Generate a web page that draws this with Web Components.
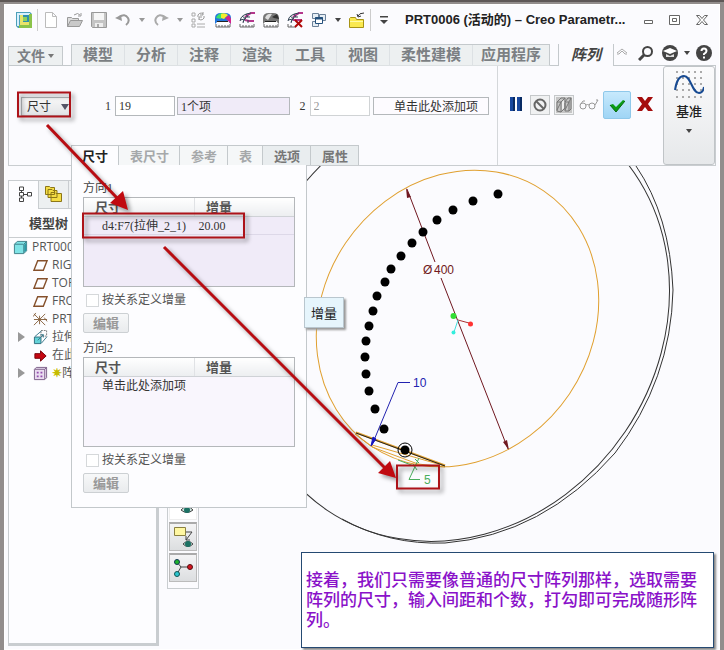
<!DOCTYPE html>
<html lang="zh-CN">
<head>
<meta charset="utf-8">
<title>PRT0006 – Creo Parametric</title>
<style>
  body { margin: 0; font: 12px/18px "Liberation Sans", "Noto Sans CJK SC", sans-serif; color: #333; background: #fbfbfe; }
</style>
</head>
<body>
<cad-window></cad-window>
<script>
const ICONS = {
  app: '<path d="M0 0h14l2 2v14H2L0 14z" fill="#4d9fb8"/><path d="M1 1h13v2H3v11H1z" fill="#d7f0ff"/><path d="M13 2h3v14H3v-3h10z" fill="#8bc34a"/><path d="M4 3h9v10H4z" fill="#2f8fae"/><path d="M5 3h2v7h6v3H4V3z" fill="#e8e36a"/><path d="M7 5h4v4H7z" fill="#8fd05a"/>',
  new: '<path d="M2.500.5h7l4 4v11h-11zM9.500.5v4h4" fill="#fff" stroke="#bbb"/>',
  open: '<path d="M.5 14.500v-9h4l1 1h6v2" fill="#ddd" stroke="#999"/><path d="M.5 14.500l3-6h12l-3 6z" fill="#c9c9c9" stroke="#999"/><path d="M7 3q4-3 6 0M14 1v3h-3" fill="none" stroke="#999"/>',
  save: '<path d="M.5.5h15v15h-14l-1-1z" fill="#c4c4c4" stroke="#999"/><path d="M3 1h10v7H3z" fill="#f6f6f6"/><path d="M4 11h8v4H4z" fill="#eee"/><path d="M6 12h2v3H6z" fill="#aaa"/>',
  undo: '<path d="M4 5q6-4 9 1q2 4-2 7" fill="none" stroke="#999" stroke-width="2"/><path d="M0 6l6-3 1 6z" fill="#999"/>',
  redo: '<path d="M12 5q-6-4-9 1q-2 4 2 7" fill="none" stroke="#aaa" stroke-width="2"/><path d="M16 6l-6-3-1 6z" fill="#aaa"/>',
  regen: '<path d="M1 1h3v3H1zM1 7h3v3H1zM1 12h3v3H1zM6 12h8M6 15h8" fill="none" stroke="#aaa"/><path d="M7 5a3 3 0 015-3M13 4a3 3 0 01-5 3M12 0v3H9M8 8V5h3" fill="none" stroke="#999"/>',
  rainbow: '<path d="M0 12V6q0-5 6-5h4q6 0 6 5v6l-3-3H3z" fill="#27d"/><path d="M1 6q2-5 7-5l-2 6z" fill="#3ce06a"/><path d="M6 2q4-2 7 1l-4 4-3-1z" fill="#f3ec2c"/><path d="M10 6l4-3 2 4v5l-4-4z" fill="#d3228b"/><path d="M3 9h10l2 3H1z" fill="#fff"/><path d="M2 9.500h11" stroke="#222"/><path d="M1 12v3h14v-3M4 13v2M7 13v2M10 13v2M13 13v2" stroke="#666" fill="none"/>',
  spline: '<path d="M16 1H12L6 5M15 9H10l-4-1" fill="none" stroke="#b4368c" stroke-width="2"/><path d="M12 1Q2 2 1 9M3 4l4 3M1 8l5-1M7 2l2 3M11 5H7l-3 5M5 8l-1 3M9 8v3" fill="none" stroke="#345"/><path d="M1 12v3h14v-3M4 13v2M7 13v2M10 13v2M13 13v2" stroke="#666" fill="none"/>',
  shade: '<path d="M0 12V6q0-5 6-5h4q6 0 6 5v6l-3-3H3z" fill="#777"/><path d="M2 6q2-5 7-4L5 8z" fill="#ddd"/><path d="M9 5l5-3 2 5-5-1z" fill="#333"/><path d="M3 9h10l2 3H1z" fill="#fff"/><path d="M2 9.500h11" stroke="#222"/><path d="M1 12v3h14v-3M4 13v2M7 13v2M10 13v2M13 13v2" stroke="#666" fill="none"/>',
  splinex: '<path d="M16 1H12L6 5M15 8H10l-4 0" fill="none" stroke="#b4368c" stroke-width="2"/><path d="M12 1Q2 2 1 9M3 4l4 3M1 8l5-1M7 2l2 3M11 5H7l-3 5M5 8l-1 3" fill="none" stroke="#345"/><path d="M1 12v3h8M4 13v2" stroke="#666" fill="none"/><path d="M8 8l7 7M15 8l-7 7" stroke="#b00808" stroke-width="2"/>',
  windows: '<path d="M1.500 1.500h6v5h-6zM8.500 2.500h6v6h-6zM1.500 9.500h6v5h-6z" fill="#e6eef5" stroke="#6c8199"/><path d="M4.500 5.500h7v6h-7z" fill="#fff" stroke="#24507d"/><path d="M4 6.500h8" stroke="#24507d" stroke-width="2"/>',
  folder: '<path d="M.5 15.500v-9l1-1h5l1 2h7v8z" fill="#fae94f" stroke="#a79315"/><path d="M1 9h13v1H1z" fill="#fffba8"/><path d="M9 4q1-3 6-3M8 2l1 3 3-1" fill="none" stroke="#333"/>',
  caretbar: '<path d="M4 4h8v1.500H4z" fill="#444"/><path d="M4 8h8l-4 4z" fill="#444"/>',
  min: '<path d="M4.500 8.500h8v3h-8z" fill="#fff" stroke="#666"/>',
  max: '<path d="M2.500 3.500h10v9h-10zM5.500 6.500h4v3h-4z" fill="#fff" stroke="#666"/>',
  close: '<path d="M2.500 3.500h3l2.500 3 2.500-3h3l-4 4.500 4 4.500h-3L8 9.500l-2.500 3h-3l4-4.500z" fill="#fff" stroke="#666"/>',
  up: '<path d="M3 8l5-4 5 4M3 9h2l3-3 3 3h2" fill="none" stroke="#aaa"/>',
  search: '<circle cx="9.500" cy="6.500" r="4.500" fill="none" stroke="#444" stroke-width="2"/><path d="M6 10l-5 5" stroke="#444" stroke-width="3"/>',
  learn: '<circle cx="8" cy="8" r="8" fill="#444"/><path d="M1 6l7-3 7 3-7 3z" fill="#fff"/><path d="M4 9l4 2 4-2v3H4z" fill="#ddd"/>',
  help: '<circle cx="8" cy="8" r="8" fill="#444"/><path d="M5.500 6q0-2.500 2.500-2.500T10.500 6Q10.500 7.500 8 9v1" fill="none" stroke="#fff" stroke-width="2"/><path d="M7 11.500h2v2H7z" fill="#fff"/>',
  pause: '<path d="M2 1h5v14H2zM9 1h5v14H9z" fill="#17479e"/><path d="M5 1h2v14H5zM12 1h2v14h-2z" fill="#082a63"/>',
  no: '<circle cx="8" cy="8" r="5.500" fill="none" stroke="#666" stroke-width="2"/><path d="M4 4l8 8" stroke="#666" stroke-width="2"/>',
  mesh: '<path d="M0 0h16v16H0z" fill="#c5c5c5"/><path d="M6 5l2-2v8l-2 2z" fill="#eee"/><path d="M1 5l4-4h4L5 5zM5 5v10l4-4V1M1 5v9l4 1M9 5l3-4h3l-2 4zM13 5v9l2-2V1M9 6v8h4M1 13L5 5M9 13l4-8" fill="none" stroke="#777"/>',
  glasses: '<circle cx="4" cy="10" r="3" fill="none" stroke="#999"/><circle cx="13" cy="10" r="3" fill="none" stroke="#999"/><path d="M7 9q1.500-1 3 0M1 9l3-4h2M16 9l3-5h-2" fill="none" stroke="#999"/>',
  check: '<path d="M1 8l3-1 3 3 7-7 2 1-9 11z" fill="#0a9c14"/><path d="M1 8l6 7 9-11" fill="none" stroke="#08670f"/>',
  cross: '<path d="M0 1h5l3 4 3-4h5l-5 7 5 7h-5l-3-4-3 4H0l5-7z" fill="#a50d0d"/>',
  treeview: '<path d="M3.500 1h4v3.500h-4zM3.500 6.500h4v3.500h-4zM3.500 12h4v3.500h-4zM11.500 6.500h4v3.500h-4zM5.500 4.500v2M5.500 10v2M7.500 8.500h4" fill="#fff" stroke="#444"/>',
  folders: '<path d="M.5.5h4l1 1h4v7h-9zM3 3.500h4l1 1h4v7H3zM6 6.500h4l1 1h5.500v8H6z" fill="#f4dd45" stroke="#8d7716"/>',
  part: '<path d="M1.500 4.500l3-3h10v10l-3 3h-10z" fill="#7fe3e6" stroke="#3d7d86"/><path d="M12 5l2-2v8l-2 2z" fill="#299aa6"/><path d="M11.500 14v-9.500l3-3M2 4.500h9" fill="none" stroke="#3d7d86"/>',
  plane: '<path d="M5 3h10l-4 10H1z" fill="none" stroke="#85502b" stroke-width="1.500"/>',
  csys: '<path d="M1 2l12 12M1 14L13 2M1 8h14M7 4v9M0 5l3-4M12 6l3 4" fill="none" stroke="#85603d"/>',
  extrude: '<path d="M1.500 7.500h7v7h-7z" fill="#65d3d8" stroke="#2d6c7c"/><path d="M8.500.5h6v6h-6z" fill="none" stroke="#777" stroke-dasharray="2 1"/><path d="M2 7l7-6M9 14l6-7M5 11l6-6M8 5h3v3" fill="none" stroke="#39798b"/>',
  insert: '<path d="M2 6h6V3l6 5.500L8 14v-3H2z" fill="#c40812" stroke="#760009"/>',
  pattern: '<path d="M1.500 3.500l2-2h11v11l-2 2h-11z" fill="#eadcf0" stroke="#7a5d86"/><path d="M4 6h2v2H4zM8 6h2v2H8zM4 10h2v2H4zM8 10h2v2H8z" fill="#944faf"/><path d="M12.500 14V3.500H2M12.500 3.500l2-2" fill="none" stroke="#7a5d86"/>',
  curve: '<path d="M2 1h28M2 7h28M2 13h28M2 19h28M2 26h28" stroke="#aaa" stroke-width="2" stroke-dasharray="2 4"/><path d="M1 19Q3 5 10 5c7 0 8 17 15 17q4 0 5-6" fill="none" stroke="#174a92" stroke-width="2"/>',
  eyeaxis: '<path d="M4 11h8M5 7v4" fill="none" stroke="#8a5a30" stroke-width="2"/><path d="M9 15q6-7 12 0q-6 5-12 0" fill="#cfe5e0" stroke="#444"/><circle cx="15" cy="15" r="3" fill="#1c7264"/>',
  eyenote: '<path d="M2.500 1.500h11v8h-11z" fill="#fff7a2" stroke="#8a8040"/><path d="M14 6h6l-6 8M14 10v4h4" fill="none" stroke="#444"/><path d="M11 18q5-5 10 0q-5 5-10 0" fill="#cfe5e0" stroke="#444"/><circle cx="16" cy="18" r="3" fill="#1c7264"/>',
  spin: '<path d="M5 5l4 5-4 7M9 10h9" fill="none" stroke="#444"/><circle cx="5" cy="5" r="2.500" fill="#1db32a" stroke="#135"/><circle cx="18" cy="10" r="2.500" fill="#d3131f" stroke="#511"/><circle cx="5" cy="17" r="2.500" fill="#2cc6cf" stroke="#155"/>'
};

const define = (name, html, setup) => {
  const template = document.createElement('template');
  template.innerHTML = html;
  customElements.define(name, class extends HTMLElement {
    constructor() {
      super();
      this.attachShadow({ mode: 'open' }).append(template.content.cloneNode(true));
    }
    connectedCallback() { if (setup) setup(this, this.shadowRoot); }
  });
};

define('ui-icon', `<style>:host{display:block;flex:none;width:16px;height:16px}svg{display:block;width:100%;height:100%}</style>`, (host, root) => {
  const box = host.getAttribute('box') || '0 0 16 16';
  root.innerHTML += `<svg viewBox="${box}" aria-hidden="true">${ICONS[host.getAttribute('name')]}</svg>`;
});

define('icon-button', `<style>
  :host{display:block;flex:none}
  button{display:block;width:100%;margin:0;padding:0;border:0;background:none}
  ui-icon{margin:auto;width:var(--icon-width,16px)}
</style><button type="button"></button>`, (host, root) => {
  const b = root.querySelector('button');
  b.setAttribute('aria-label', host.getAttribute('label') || host.getAttribute('name'));
  b.innerHTML = `<ui-icon name="${host.getAttribute('name')}" box="${host.getAttribute('box') || '0 0 16 16'}"></ui-icon>`;
});

define('caret-button', `<style>
  :host{display:block;flex:none;width:6px}
  button{display:block;margin:0;padding:4px 0;border:0;background:none}
  i{display:block;border:3px solid transparent;border-top:4px solid var(--caret,#999);border-bottom:0}
</style><button type="button" aria-label="更多"><i></i></button>`);

define('title-bar', `<style>
  :host{display:flex;align-items:center;gap:8px;height:32px;padding:0 10px 0 12px}
  hr{flex:none;width:1px;height:22px;margin:0 -3px;border:0;background:#ccc}
  h1{flex:1;min-width:0;margin:0 0 0 5px;font-size:13px;line-height:20px;font-weight:bold;color:#222;white-space:nowrap}
  .win{display:flex;gap:11px}
</style>
<icon-button name="app" label="Creo"></icon-button><hr>
<icon-button name="new" label="新建"></icon-button><icon-button name="open" label="打开"></icon-button><icon-button name="save" label="保存"></icon-button>
<icon-button name="undo" label="撤消"></icon-button><caret-button></caret-button><icon-button name="redo" label="重做"></icon-button><caret-button></caret-button>
<icon-button name="regen"></icon-button><icon-button name="rainbow"></icon-button><icon-button name="spline"></icon-button><icon-button name="shade"></icon-button><icon-button name="splinex"></icon-button><icon-button name="windows"></icon-button>
<caret-button style="--caret:#444"></caret-button><icon-button name="folder"></icon-button><hr><icon-button name="caretbar"></icon-button>
<h1>PRT0006 (活动的) – Creo Parametr...</h1>
<div class="win"><icon-button name="min" label="最小化"></icon-button><icon-button name="max" label="最大化"></icon-button><icon-button name="close" label="关闭"></icon-button></div>`);

define('ribbon-tabs', `<style>
  :host{display:flex;align-items:flex-end;margin:8px 4px 0;height:22px}
  button{margin:0;padding:0;border:0;background:none;font:bold 15px/20px "Liberation Sans","Noto Sans CJK SC",sans-serif;color:#7b7f83;white-space:nowrap}
  .file{width:55px;height:20px;border:1px solid #c4c9cc;background:#edf0f1;display:flex;align-items:center;justify-content:center;gap:3px;font-size:14px}
  i{border:3px solid transparent;border-top:4px solid #777;border-bottom:0}
  .gap{width:8px;box-sizing:border-box;border-bottom:1px solid #c4c9cc}
  nav{display:flex;border:1px solid #c4c9cc;border-bottom-color:#dde1e3;background:#edf0f1;height:20px}
  nav button{padding:0 11px;border-right:1px solid #dde1e4}
  nav button:last-child{border:0;padding:0 8px}
  .active{width:56px;height:22px;border:solid #c4c9cc;border-width:0 1px;font-style:italic;color:#444}
  .tools{flex:1;display:flex;align-items:center;justify-content:space-between;height:21px;padding:0 4px 4px 0;box-sizing:border-box;border-bottom:1px solid #c4c9cc}
  .tools caret-button{margin:0 -2px}
</style>
<button class="file" type="button">文件<i></i></button><span class="gap"></span>
<nav><button>模型</button><button>分析</button><button>注释</button><button>渲染</button><button>工具</button><button>视图</button><button>柔性建模</button><button>应用程序</button></nav>
<span class="gap"></span><button class="active" type="button">阵列</button>
<div class="tools"><icon-button name="up" label="折叠"></icon-button><icon-button name="search" label="搜索"></icon-button><icon-button name="learn" label="学习"></icon-button><caret-button style="--caret:#444"></caret-button><icon-button name="help" label="帮助"></icon-button></div>`);

define('direction-group', `<style>
  :host{display:block;margin-bottom:6px}
  h2{margin:0;font:12px/18px "Liberation Serif","Noto Sans CJK SC",serif;color:#444}
  .list{height:88px;border:1px solid #b4b7ba;background:var(--fill)}
  table{width:100%;table-layout:fixed;border-collapse:collapse}
  th{width:auto;height:18px;padding:0 0 0 11px;text-align:left;font:bold 13px/18px "Noto Sans CJK SC",sans-serif;color:#555;background:linear-gradient(#fff,#eceef0);border-bottom:1px solid #cfd2d6}
  th:first-child{width:99px;border-right:1px solid #e0e2e5}
  td{padding:0 0 0 4px;height:17px;font:12px/16px "Liberation Serif","Noto Sans CJK SC",serif;color:#333;white-space:nowrap}
  td:first-child{padding-left:18px}
  :host([selected]) td{border-bottom:1px solid #ddd8e8}
  label{display:flex;align-items:center;gap:3px;margin:4px 0 0 3px;color:#555;line-height:18px}
  input{appearance:none;width:13px;height:13px;margin:0;border:1px solid #d5d8da;background:#fff}
  button{display:block;width:46px;height:20px;margin:4px 0 0;padding:0;border:1px solid #ccd0d3;border-radius:2px;background:linear-gradient(#f7f8f9,#e9ebed);font:bold 13px/16px "Noto Sans CJK SC",sans-serif;color:#999}
</style><h2><slot></slot></h2><div class="list"><table><thead><tr><th>尺寸</th><th>增量</th></tr></thead><tbody><tr></tr></tbody></table></div>
<label><input type="checkbox">按关系定义增量</label><button type="button" disabled>编辑</button>`, (host, root) => {
  const row = root.querySelector('tbody tr');
  const cells = host.getAttribute('cells').split('|');
  row.innerHTML = cells.map(c => `<td${cells.length === 1 ? ' colspan="2"' : ''}>${c}</td>`).join('');
});

define('dimension-panel', `<style>
  :host{display:block;box-sizing:border-box;width:236px;padding:14px 11px 8px;border:1px solid #c3c8cb;border-top:0;background:#fdfdff}
</style>
<direction-group selected cells="d4:F7(拉伸_2_1)|20.00" style="--fill:#f0ebf8">方向1</direction-group>
<direction-group cells="单击此处添加项" style="--fill:#f9f6fd">方向2</direction-group>`);

define('pattern-dashboard', `<style>
  :host{position:relative;z-index:2;display:flex;margin:0 4px;min-height:100px;box-sizing:border-box;border:1px solid #c9cdd0;border-top:0}
  .main{flex:1;min-width:0;display:flex;flex-direction:column;justify-content:space-between}
  form{display:flex;align-items:center;margin:29px 8px 0 12px;height:22px;font-family:"Liberation Serif","Noto Sans CJK SC",serif}
  select,input{box-sizing:border-box;margin:0;border:1px solid #b4b8bb;border-radius:0;background:#fff;font:12px/16px "Liberation Serif","Noto Sans CJK SC",serif;color:#333;padding:0 3px}
  .pick{position:relative;flex:none;width:49px;margin-right:35px}
  select{appearance:none;display:block;width:100%;height:19px;padding:0 5px;background:linear-gradient(#f8f8f8,#e2e4e6);font-family:"Noto Sans CJK SC",sans-serif}
  .pick i{position:absolute;right:1px;top:7px;border:4px solid transparent;border-top:6px solid #556;border-bottom:0;pointer-events:none}
  label{display:flex;flex:none;align-items:center;gap:4px}
  input{height:20px}
  .n{width:60px;margin-right:2px}
  .a{flex:1;min-width:0;height:18px;background:#f0ebf8}
  label.two{margin:0 3px 0 10px}
  .two .n{color:#999;border-color:#d0d3d5;margin:0}
  .b{flex:1;min-width:0;height:18px;text-align:right;padding:0 10px 0 0;background:#fdfbff}
  .tabs{position:relative;display:flex;margin-left:62px;height:20px}
  .tabs button{box-sizing:border-box;height:20px;margin:0;padding:0 10px 0 11px;border:1px solid #c4c9cc;border-left-width:0;border-bottom:0;background:#f5f7f8;font:bold 13px/18px "Noto Sans CJK SC",sans-serif;color:#a5a8aa;white-space:nowrap}
  .tabs button.on{padding:0 10px;border-left-width:1px;background:#fdfdff;color:#222}
  .tabs button.strong{color:#777;background:#e9edef}
  dimension-panel{position:absolute;left:0;top:20px}
  .cmd{flex:none;box-sizing:border-box;width:166px;display:flex;align-items:flex-start;justify-content:space-between;padding:25px 8px 0 8px;border-left:1px solid #d4d7da}
  .cmd icon-button{width:20px;padding:5px 0}
  .cmd .box{margin-top:4px;padding:1px 0;width:18px;border:1px solid #c5c8ca;background:#f0f1f2}
  .cmd .ok{width:26px;border:1px solid #8fc8ea;border-radius:2px;background:linear-gradient(#c7e9fc,#9fd5f5)}
  .datum{flex:none;box-sizing:border-box;width:52px;margin:0;padding:4px 0 0;border:1px solid #c0c4c7;border-radius:3px;background:linear-gradient(#fbfbfc,#e6e8ea);display:flex;flex-direction:column;align-items:center;font:500 13px/20px "Noto Sans CJK SC",sans-serif;color:#222}
  .datum ui-icon{width:30px;height:28px;margin-bottom:2px}
  .datum i{margin-top:8px;border:3px solid transparent;border-top:4px solid #444;border-bottom:0}
</style>
<div class="main">
  <form>
    <div class="pick"><select aria-label="阵列类型"><option>尺寸</option></select><i></i></div>
    <label>1 <input class="n" value="19"></label><input class="a" aria-label="第一方向" value="1个项">
    <label class="two">2 <input class="n" value="2" disabled></label><input class="b" aria-label="第二方向" value="单击此处添加项">
  </form>
  <div class="tabs"><button class="on">尺寸</button><button>表尺寸</button><button>参考</button><button>表</button><button class="strong">选项</button><button class="strong">属性</button><dimension-panel></dimension-panel></div>
</div>
<div class="cmd"><icon-button name="pause" label="暂停"></icon-button><icon-button class="box" name="no" label="无预览"></icon-button><icon-button class="box" name="mesh" label="几何预览"></icon-button><icon-button name="glasses" box="0 0 20 16" style="--icon-width:20px" label="预览"></icon-button><icon-button class="ok" name="check" label="确定"></icon-button><icon-button name="cross" label="取消"></icon-button></div>
<button class="datum" type="button"><ui-icon name="curve" box="0 0 30 28"></ui-icon>基准<i></i></button>`);

define('tree-item', `<style>
  :host{display:flex;align-items:center;gap:4px;height:18px;padding-left:24px;font:12px/18px "Open Sans","Noto Sans CJK SC",sans-serif;color:#555;white-space:nowrap}
  :host([root]){padding-left:4px}
  :host([branch]){padding-left:9px}
  ui-icon{width:15px;height:15px}
  i{width:0;margin-right:4px;border:5px solid transparent;border-left:7px solid #999;border-right:0}
</style><span><slot></slot></span>`, (host, root) => {
  root.querySelector('span').insertAdjacentHTML('beforebegin',
    `${host.hasAttribute('branch') ? '<i></i>' : ''}<ui-icon name="${host.getAttribute('icon')}"></ui-icon>`);
});

define('model-tree', `<style>
  :host{display:flex;flex:none;flex-direction:column;box-sizing:border-box;width:151px;margin:14px 0 4px 4px;border:1px solid #c9cdd0;border-width:1px 3px 3px 1px;background:#fdfdff;overflow:hidden}
  .tabs{display:flex;height:28px}
  .tabs icon-button{box-sizing:border-box;width:29px;padding:5px 0}
  .tabs .off{width:31px;border:1px solid #c9cdd0;border-top:0;background:#edf0f1;--icon-width:17px}
  .tabs span{flex:1;border-bottom:1px solid #c9cdd0;background:#edf0f1}
  h2{margin:0;padding-left:20px;font:bold 13px/28px "Noto Sans CJK SC",sans-serif;color:#444;border-bottom:1px solid #c9cdd0}
  b{color:#c5bc00}
</style>
<div class="tabs"><icon-button name="treeview" label="模型树"></icon-button><icon-button class="off" name="folders" box="0 0 17 16" label="文件夹"></icon-button><span></span></div>
<h2>模型树</h2>
<tree-item root icon="part">PRT0006</tree-item><tree-item icon="plane">RIGHT</tree-item><tree-item icon="plane">TOP</tree-item><tree-item icon="plane">FRONT</tree-item><tree-item icon="csys">PRT</tree-item><tree-item branch icon="extrude">拉伸</tree-item><tree-item icon="insert">在此</tree-item><tree-item branch icon="pattern"><b>✷</b>阵</tree-item>`);

define('view-tools', `<style>
  :host{display:block;flex:none;align-self:flex-end;width:30px;margin:0 0 61px 8px;border:1px solid #c9cdd0;padding-bottom:4px}
  button{display:block;box-sizing:border-box;width:28px;height:29px;margin:1px 1px 2px;padding:2px;border:1px solid #bbb;border-top:2px solid #aaa;background:linear-gradient(#f4f4f5,#dcdee0)}
  button.plain{background:#fff;border-color:#eee}
  ui-icon{width:22px;height:22px}
</style>
<button class="plain" aria-label="轴显示"><ui-icon name="eyeaxis" box="0 0 22 22"></ui-icon></button><button aria-label="注释显示"><ui-icon name="eyenote" box="0 0 22 22"></ui-icon></button><button aria-label="旋转中心"><ui-icon name="spin" box="0 0 22 22"></ui-icon></button>`);

define('model-sketch', `<style>:host{position:absolute;left:0;top:0;pointer-events:none}svg{display:block}text{font:12px "Liberation Sans",sans-serif}</style>`, (host, root) => {
  const dots = [[498,194],[473,201],[453,210],[437,220],[423,232],[412,243],[401,256],[391,269],[385,282],[377,296],[373,311],[369,326],[366,341],[365,357],[366,374],[369,391],[375,409],[384,429],[405,450]];
  root.innerHTML += `<svg width="716" height="600" viewBox="0 0 716 600" fill="none">
    <clipPath id="view"><path d="M306 166H716V600H306z"/></clipPath>
    <g clip-path="url(#view)" stroke="#333">
      <ellipse rx="232" ry="203" transform="translate(457 318) rotate(-56)"/>
      <path d="M636 166q34 50 37 124q-2 90-58 163q-72 82-170 90q-56 2-103-24" />
    </g>
    <ellipse rx="154" ry="135" transform="translate(457.500 318.500) rotate(-56)" stroke="#e0a030"/>
    <path d="M355 434L372 447L418 464L445 467M372 445L445 466" stroke="#e0a030"/><path d="M356 432.500L445 465.500" stroke="#e0a030" stroke-width="2"/><path d="M356 433L445 466" stroke="#222"/>
    <path d="M407 189L435 262M441 278L508 449" stroke="#701820"/><path d="M406 188l5 9-4 1zM509 450l-6-8 4-2z" fill="#701820"/>
    <text x="423" y="274" fill="#701820">Ø</text><text x="434" y="274" fill="#701820">400</text>
    <path d="M372 445L398 382.500H410" stroke="#2222b0"/><path d="M371 446l2-9 3 2z" fill="#1515c0" stroke="#1515c0"/><text x="413" y="387" fill="#2222b0">10</text>
    <path d="M458 320l11 3" stroke="#a33"/><path d="M458 320l-4 12" stroke="#4dd"/><circle cx="453.500" cy="316" r="3" fill="#3d3"/><circle cx="470.500" cy="324" r="2.500" fill="#f33"/><circle cx="453.500" cy="332.500" r="2" fill="#3ed"/>
    ${dots.map(p => `<circle cx="${p[0]}" cy="${p[1]}" r="4.500" fill="#000"/>`).join('')}<circle cx="405" cy="450" r="7" stroke="#000"/>
    <path d="M398 460l16 6M419 458L409 479.500H420M415 459l4 4M413 464l4 6" stroke="#4aae5c"/><text x="424" y="484" fill="#4aae5c">5</text>
  </svg>`;
});

define('hint-tip', `<style>:host{position:absolute;z-index:3;left:304px;top:297px;box-sizing:border-box;padding:5px 6px;border:1px solid #b9c6ce;background:#e6f5fc;box-shadow:2px 2px 2px #999;font:13px/19px "Noto Sans CJK SC",sans-serif;color:#222}</style><slot></slot>`);

define('lesson-note', `<style>
  :host{position:relative;z-index:1;flex:1;align-self:flex-end;box-sizing:border-box;margin:0 6px 2px 102px;padding:16px 4px 18px;border:1px solid #254a72;background:#fff;box-shadow:2px 2px 2px #888;font:500 17px/20px "Noto Sans CJK SC",sans-serif;color:#8a12c9}
  p{margin:0}
</style><p><slot></slot></p>`);

define('mark-layer', `<style>:host{position:absolute;z-index:4;left:0;top:0;pointer-events:none}svg{display:block;filter:drop-shadow(3px 3px 2px rgba(0,0,0,.4))}</style>
<svg width="716" height="600" viewBox="0 0 716 600" fill="none"><path d="M18 92.500H70V116.500H18zM83 213.500H244V237.500H83zM397 465.500H439V488.500H397z" stroke="#ad1319" stroke-width="2"/><path d="M47 125L118 199M164 247L386 469" stroke="#b80d12" stroke-width="3"/><path d="M128 210L110 203L123 191zM396 478L378 473L390 461z" fill="#c00a10"/></svg>`);

define('cad-window', `<style>
  :host{position:relative;display:flex;flex-direction:column;box-sizing:border-box;min-height:100vh;background:#fbfbfe;overflow:hidden}
  .frame{flex:1;display:flex;flex-direction:column;border:solid #928d8c;border-width:4px 4px 0;box-shadow:inset 0 0 0 1px #fff}
  .work{flex:1;display:flex}
  .top{position:absolute;left:0;right:0;top:0;height:2px;background:#5e5857}
</style>
<div class="frame"><title-bar></title-bar><ribbon-tabs></ribbon-tabs><pattern-dashboard></pattern-dashboard>
<div class="work"><model-tree></model-tree><view-tools></view-tools><lesson-note>接着，我们只需要像普通的尺寸阵列那样，选取需要阵列的尺寸，输入间距和个数，打勾即可完成随形阵列。</lesson-note></div></div>
<span class="top"></span><model-sketch></model-sketch><hint-tip>增量</hint-tip><mark-layer></mark-layer>`);
</script>
</body>
</html>
